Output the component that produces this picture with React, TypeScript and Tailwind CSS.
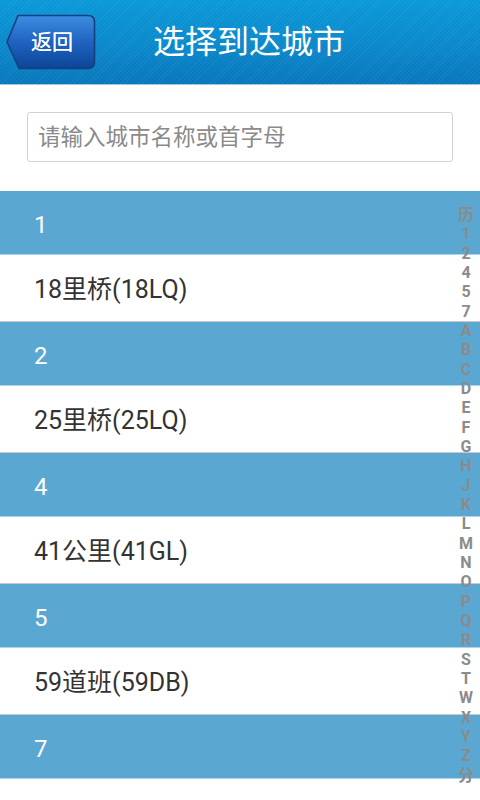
import * as React from 'react';

// Grouped cities shown in the list
const groups = [
  { key: '1', cities: ['18里桥(18LQ)'] },
  { key: '2', cities: ['25里桥(25LQ)'] },
  { key: '4', cities: ['41公里(41GL)'] },
  { key: '5', cities: ['59道班(59DB)'] },
  { key: '7', cities: [] as string[] },
];

// Side index letters
const indexKeys = ['历', '1', '2', '4', '5', '7', 'A', 'B', 'C', 'D', 'E', 'F', 'G', 'H', 'J', 'K', 'L', 'M', 'N', 'O', 'P', 'Q', 'R', 'S', 'T', 'W', 'X', 'Y', 'Z', '分'];

const BackButton: React.FC = () => (
  <button className="relative w-[90px] h-[56px] flex items-center">
    <svg width="90" height="56" viewBox="0 0 90 56" className="absolute inset-0">
      <defs>
        <linearGradient id="backGrad" x1="0" y1="0" x2="0" y2="1">
          <stop offset="0" stopColor="#3d8de2" />
          <stop offset="0.5" stopColor="#1f63c0" />
          <stop offset="1" stopColor="#0c4596" />
        </linearGradient>
      </defs>
      <path
        d="M12 1.5 L82 1.5 Q88.5 1.5 88.5 8 L88.5 48 Q88.5 54.5 82 54.5 L13 54.5 L1 28 Z"
        fill="url(#backGrad)"
        stroke="#173f7c"
        strokeWidth="1.6"
        strokeLinejoin="round"
      />
    </svg>
    <span className="relative ml-[25px] text-[21px] leading-none text-white [text-shadow:0_0_0.4px_#fff]">返回</span>
  </button>
);

export default function App() {
  const [query, setQuery] = React.useState('');

  return (
    <div className="relative w-[480px] min-h-[800px] bg-white overflow-hidden [font-family:Roboto,'Noto_Sans_CJK_SC',sans-serif]">
      {/* Title bar */}
      <header className="h-[85px] flex items-center border-b border-[#a3c6df] bg-[image:repeating-linear-gradient(135deg,rgba(255,255,255,0.05)_0px,rgba(255,255,255,0.05)_1px,transparent_1px,transparent_3px),linear-gradient(to_bottom,#0a99d9,#0a86c9_60%,#0877bb)]">
        <div className="ml-[6px]">
          <BackButton />
        </div>
        <h1 className="ml-[57px] text-[32px] leading-none text-white font-normal">选择到达城市</h1>
      </header>

      {/* Search */}
      <div className="px-[27px] pt-[27px] pb-[29px]">
        <input
          value={query}
          onChange={(e) => setQuery(e.target.value)}
          placeholder="请输入城市名称或首字母"
          className="w-full h-[50px] px-[10px] border border-[#d2d2d2] rounded-[3px] text-[22.5px] text-[#333] placeholder:text-[#8a8a8a] outline-none"
        />
      </div>

      {/* City list */}
      <div>
        {groups.map((g) => (
          <div key={g.key}>
            <div className="h-[64px] flex items-center pl-[34px] pt-[4px] bg-[#5aa8d1] border-b border-[#a9d5ee] text-[24px] text-white">
              {g.key}
            </div>
            {g.cities.map((c) => (
              <div key={c} className="h-[67px] flex items-center pl-[34px] pt-[3px] border-b border-[#c9c9c9] text-[25px] text-[#333]">
                {c}
              </div>
            ))}
          </div>
        ))}
      </div>

      {/* Letter index */}
      <div className="absolute top-[205px] right-0 w-[28px] flex flex-col items-center">
        {indexKeys.map((k) => (
          <div key={k} className="h-[19.33px] leading-[19.33px] text-[16px] font-bold text-[#8b8b8b]">
            {k}
          </div>
        ))}
      </div>
    </div>
  );
}
